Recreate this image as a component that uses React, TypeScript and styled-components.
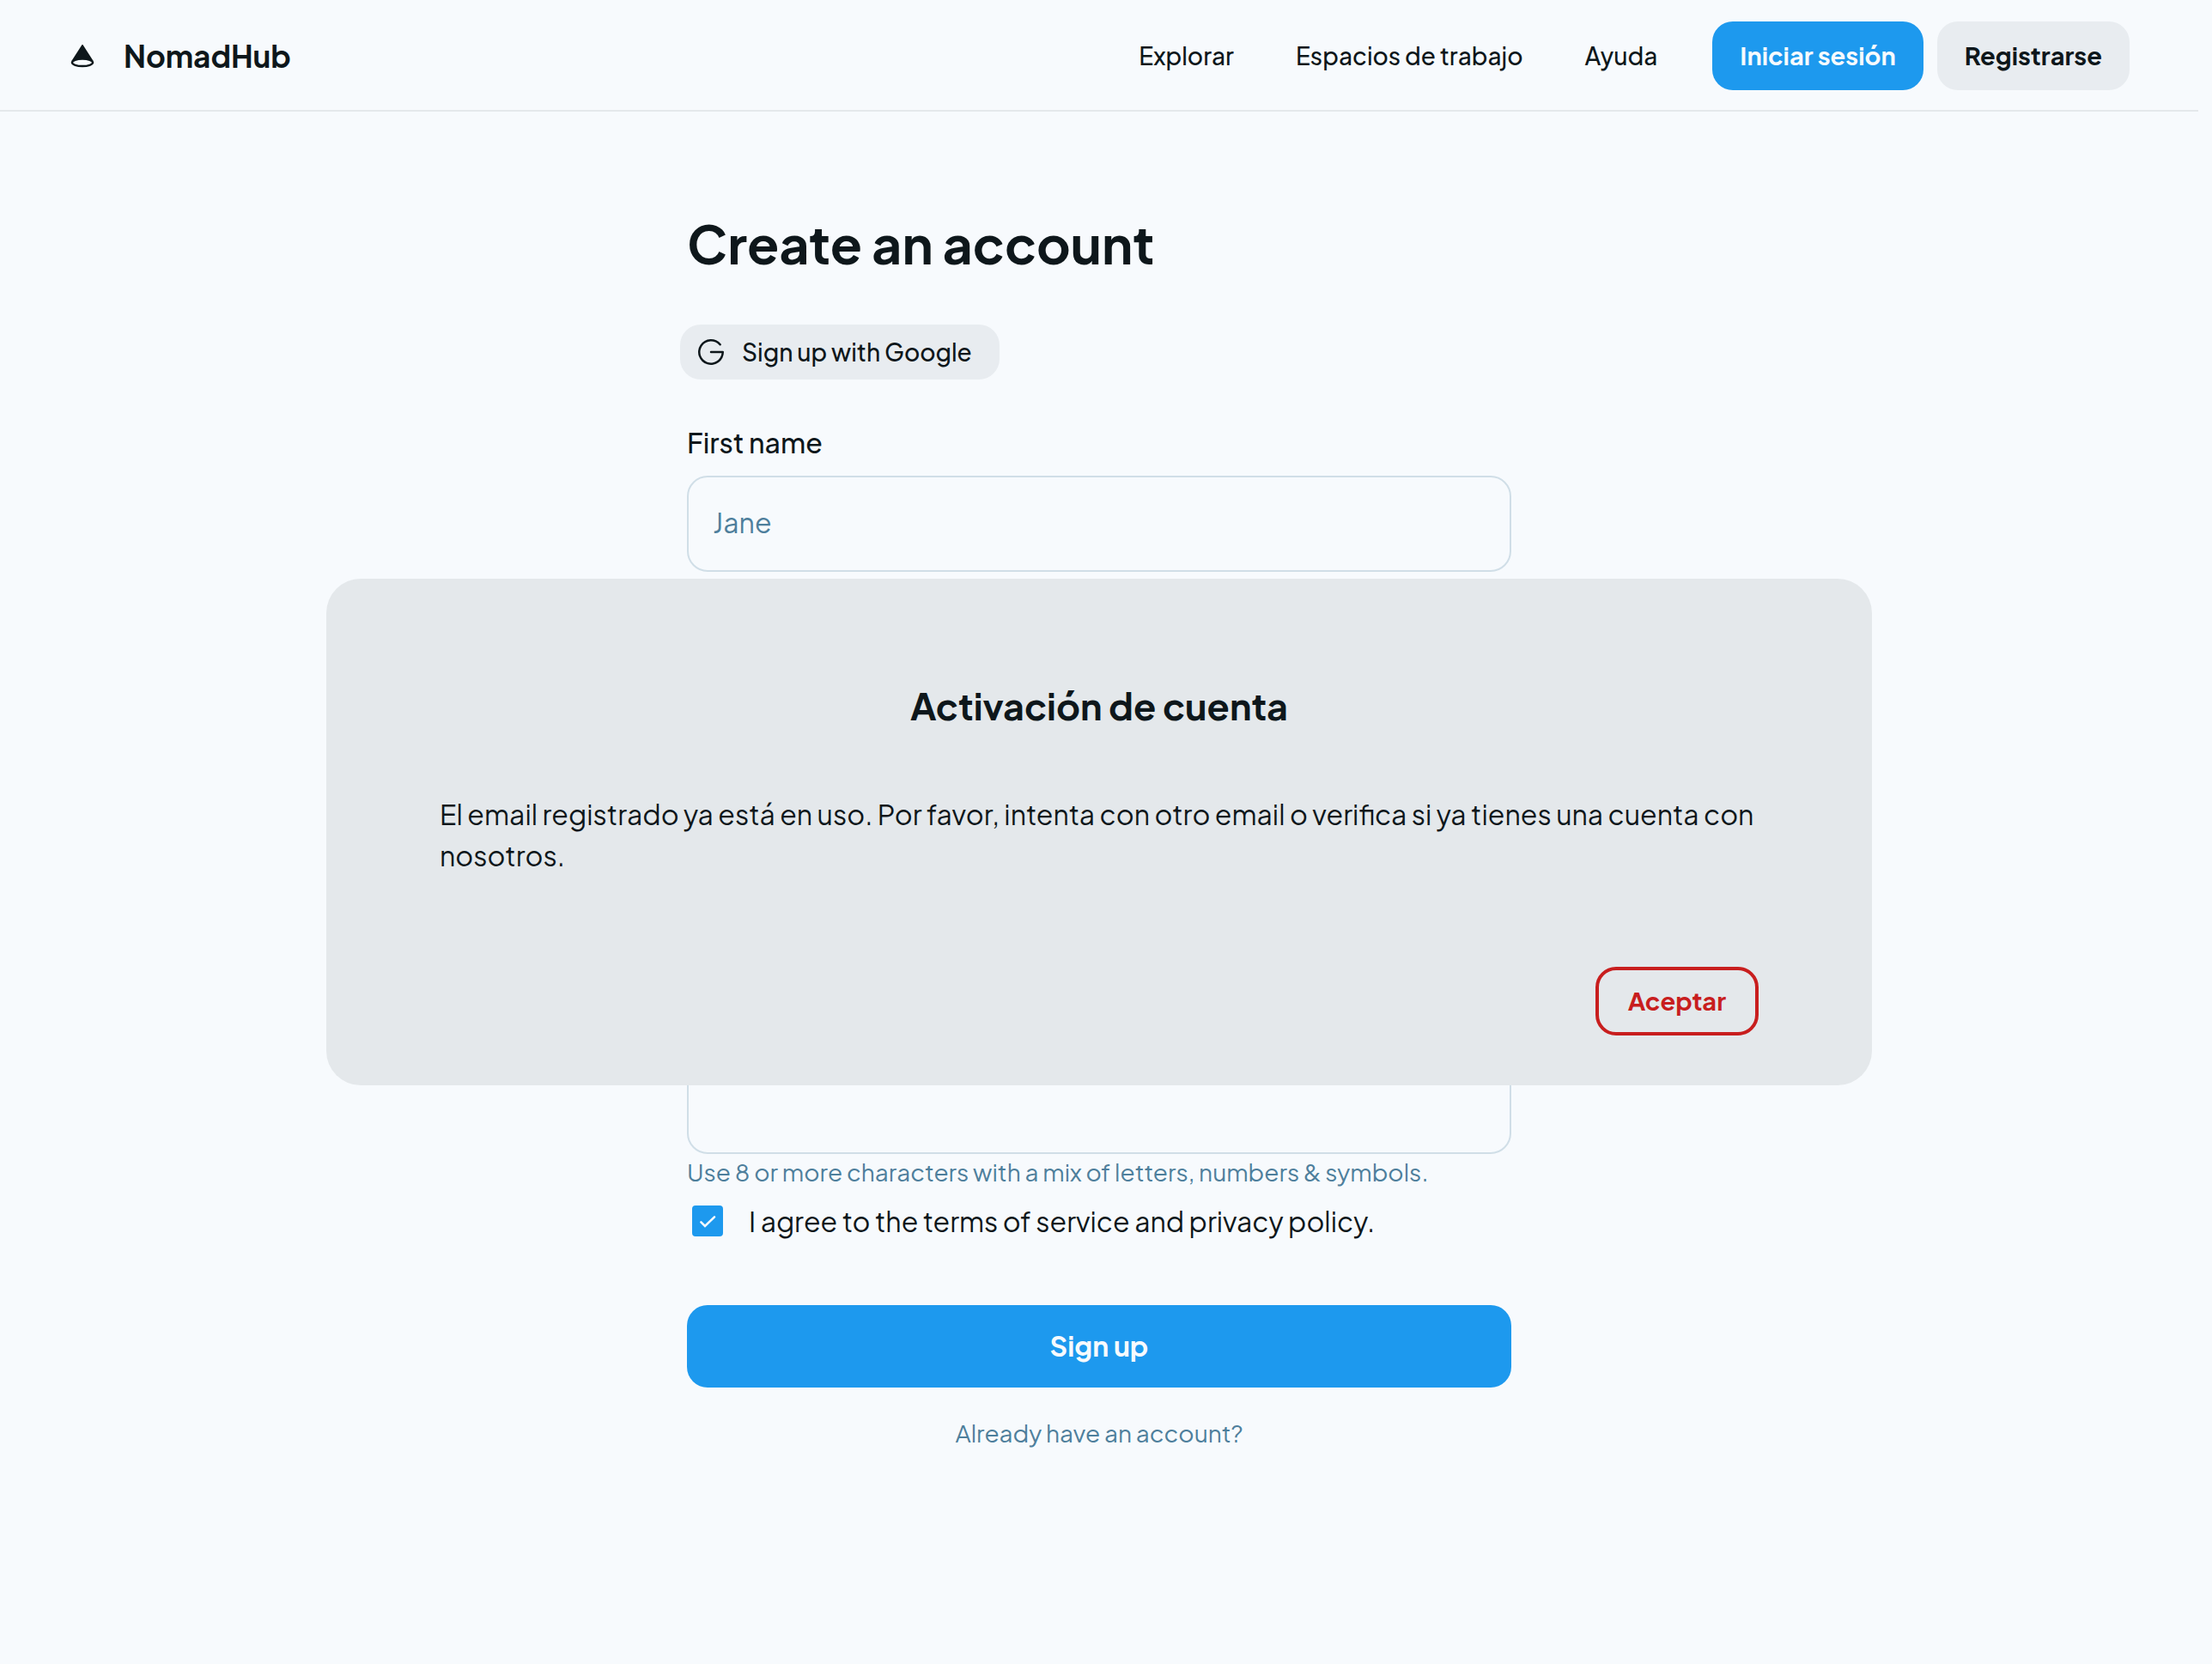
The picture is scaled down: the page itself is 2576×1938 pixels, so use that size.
import React from "react";
import styled, { createGlobalStyle } from "styled-components";

const color = {
  page: "#f7fafd",
  ink: "#0e171b",
  muted: "#4e7f9c",
  line: "#d0dee7",
  soft: "#e8ecf0",
  panel: "#e4e8eb",
  blue: "#1d99ee",
  red: "#c81e1e",
};

const GlobalStyle = createGlobalStyle`
  *, *::before, *::after { box-sizing: border-box; }
  body {
    margin: 0;
    background: ${color.page};
    color: ${color.ink};
    font-family: "Plus Jakarta Sans", Inter, "Noto Sans", sans-serif;
  }
  h1, h2, p { margin: 0; }
  button, input { font: inherit; color: inherit; }
`;

const Page = styled.div`
  min-height: 100vh;
  margin-right: 16px;
`;

const Header = styled.header`
  display: flex;
  align-items: center;
  justify-content: space-between;
  padding: 25px 80px 23px;
  border-bottom: 2px solid ${color.panel};
`;

const Brand = styled.a`
  display: flex;
  align-items: center;
  gap: 32px;
  color: inherit;
  font-size: 35px;
  line-height: 48px;
  font-weight: 700;
  text-decoration: none;

  svg {
    width: 32px;
    height: 32px;
  }
`;

const Actions = styled.div`
  display: flex;
  align-items: center;
  gap: 64px;
`;

const Nav = styled.nav`
  display: flex;
  gap: 72px;
`;

const NavLink = styled.a`
  color: inherit;
  font-size: 28px;
  line-height: 40px;
  font-weight: 500;
  text-decoration: none;
`;

const ButtonGroup = styled.div`
  display: flex;
  gap: 16px;
`;

const Button = styled.button<{ $tone: "primary" | "soft" | "danger" }>`
  height: 80px;
  padding: 0 ${(p) => (p.$tone === "danger" ? 34 : 32)}px 2px;
  border: ${(p) => (p.$tone === "danger" ? `4px solid ${color.red}` : "0")};
  border-radius: 24px;
  background: ${(p) =>
    p.$tone === "primary" ? color.blue : p.$tone === "soft" ? color.soft : "transparent"};
  color: ${(p) =>
    p.$tone === "primary" ? color.page : p.$tone === "soft" ? color.ink : color.red};
  font-size: 29px;
  line-height: 40px;
  font-weight: 700;
  cursor: pointer;
`;

const Main = styled.main`
  width: 100%;
  max-width: 976px;
  margin: 0 auto;
  padding: 114px 0 80px;
`;

const Title = styled.h1`
  padding: 0 8px;
  font-size: 61px;
  line-height: 80px;
  font-weight: 700;
`;

const GoogleButton = styled.button`
  display: flex;
  align-items: center;
  gap: 16px;
  height: 64px;
  margin: 54px 0 49px;
  padding: 0 32px 0 16px;
  border: 0;
  border-radius: 24px;
  background: ${color.soft};
  font-size: 28px;
  line-height: 40px;
  font-weight: 500;
  cursor: pointer;

  svg {
    width: 40px;
    height: 40px;
  }
`;

const Form = styled.form`
  display: flex;
  flex-direction: column;
  padding: 0 8px;
`;

const Fields = styled.div`
  display: grid;
  gap: 51px;
`;

const Field = styled.div`
  display: grid;
  gap: 15px;
`;

const Label = styled.label`
  font-size: 32px;
  line-height: 48px;
  font-weight: 500;
`;

const TextInput = styled.input`
  width: 100%;
  height: 112px;
  padding: 0 28px 4px;
  border: 2px solid ${color.line};
  border-radius: 24px;
  outline: 0;
  background: ${color.page};
  font-size: 32px;

  &::placeholder {
    color: ${color.muted};
    opacity: 1;
  }
`;

const Hint = styled.p`
  color: ${color.muted};
  font-size: 28px;
  line-height: 42px;
`;

const Terms = styled.label`
  display: flex;
  align-items: center;
  gap: 30px;
  margin: 18px 0 80px;
  padding-left: 6px;
  font-size: 32px;
  line-height: 36px;
`;

const Tick = styled.span`
  display: grid;

  input,
  svg {
    grid-area: 1 / 1;
    width: 36px;
    height: 36px;
    margin: 0;
  }

  input {
    appearance: none;
    border: 2px solid ${color.line};
    border-radius: 4px;
  }

  input:checked {
    border-color: ${color.blue};
    background: ${color.blue};
  }

  svg {
    pointer-events: none;
  }
`;

const Submit = styled.button`
  height: 96px;
  padding-bottom: 4px;
  border: 0;
  border-radius: 24px;
  background: ${color.blue};
  color: ${color.page};
  font-size: 32px;
  font-weight: 700;
  cursor: pointer;
`;

const LoginLink = styled.a`
  align-self: center;
  margin-top: 32px;
  color: ${color.muted};
  font-size: 28px;
  line-height: 42px;
  text-decoration: none;
`;

const Overlay = styled.div`
  position: fixed;
  inset: 0 16px 0 0;
  display: flex;
  align-items: center;
  justify-content: center;
`;

const Dialog = styled.section`
  display: flex;
  flex-direction: column;
  width: 100%;
  max-width: 1800px;
  padding: 120px 132px 58px;
  border-radius: 40px;
  background: ${color.panel};
`;

const DialogTitle = styled.h2`
  font-size: 43px;
  line-height: 56px;
  font-weight: 700;
  text-align: center;
`;

const DialogText = styled.p`
  margin: 74px 0 106px;
  font-size: 32px;
  line-height: 48px;
`;

const DialogActions = styled.div`
  display: flex;
  justify-content: flex-end;
`;

const fields = [
  { id: "first-name", label: "First name", type: "text", placeholder: "Jane" },
  { id: "last-name", label: "Last name", type: "text", placeholder: "Doe" },
  { id: "email", label: "Email", type: "email", placeholder: "" },
  { id: "password", label: "Password", type: "password", placeholder: "" },
];

function ConeLogo() {
  return (
    <svg viewBox="0 0 48 48" fill="none" aria-hidden="true">
      <path
        d="M24.9 5C24.5 4.3 23.5 4.3 23.1 5L4.8 33.5C8 31 15 29.6 24 29.6C33 29.6 40 31 43.2 33.5L24.9 5Z"
        fill="currentColor"
      />
      <ellipse cx="24" cy="35.7" rx="18.1" ry="6.4" stroke="currentColor" strokeWidth="3.6" />
    </svg>
  );
}

function GoogleLogo() {
  return (
    <svg viewBox="0 0 256 256" fill="currentColor" aria-hidden="true">
      <path d="M224,128a96,96,0,1,1-21.95-61.09,8,8,0,1,1-12.33,10.18A80,80,0,1,0,207.6,136H128a8,8,0,0,1,0-16h88A8,8,0,0,1,224,128Z" />
    </svg>
  );
}

export default function App() {
  return (
    <Page>
      <GlobalStyle />
      <Header>
        <Brand href="#">
          <ConeLogo />
          NomadHub
        </Brand>
        <Actions>
          <Nav>
            <NavLink href="#explorar">Explorar</NavLink>
            <NavLink href="#espacios">Espacios de trabajo</NavLink>
            <NavLink href="#ayuda">Ayuda</NavLink>
          </Nav>
          <ButtonGroup>
            <Button type="button" $tone="primary">Iniciar sesión</Button>
            <Button type="button" $tone="soft">Registrarse</Button>
          </ButtonGroup>
        </Actions>
      </Header>

      <Main>
        <Title>Create an account</Title>
        <GoogleButton type="button">
          <GoogleLogo />
          Sign up with Google
        </GoogleButton>
        <Form onSubmit={(e) => e.preventDefault()}>
          <Fields>
            {fields.map((f) => (
              <Field key={f.id}>
                <Label htmlFor={f.id}>{f.label}</Label>
                <TextInput id={f.id} type={f.type} placeholder={f.placeholder} />
              </Field>
            ))}
          </Fields>
          <Hint>Use 8 or more characters with a mix of letters, numbers &amp; symbols.</Hint>
          <Terms>
            <Tick>
              <input type="checkbox" defaultChecked />
              <svg viewBox="0 0 36 36" fill="none" aria-hidden="true">
                <path
                  d="M10.4 19.4L15 24L26 13.4"
                  stroke={color.page}
                  strokeWidth="2.6"
                  strokeLinecap="round"
                />
              </svg>
            </Tick>
            I agree to the terms of service and privacy policy.
          </Terms>
          <Submit type="submit">Sign up</Submit>
          <LoginLink href="#login">Already have an account?</LoginLink>
        </Form>
      </Main>

      <Overlay>
        <Dialog role="dialog" aria-labelledby="dialog-title">
          <DialogTitle id="dialog-title">Activación de cuenta</DialogTitle>
          <DialogText>
            El email registrado ya está en uso. Por favor, intenta con otro email o verifica si ya
            tienes una cuenta con nosotros.
          </DialogText>
          <DialogActions>
            <Button type="button" $tone="danger">Aceptar</Button>
          </DialogActions>
        </Dialog>
      </Overlay>
    </Page>
  );
}
